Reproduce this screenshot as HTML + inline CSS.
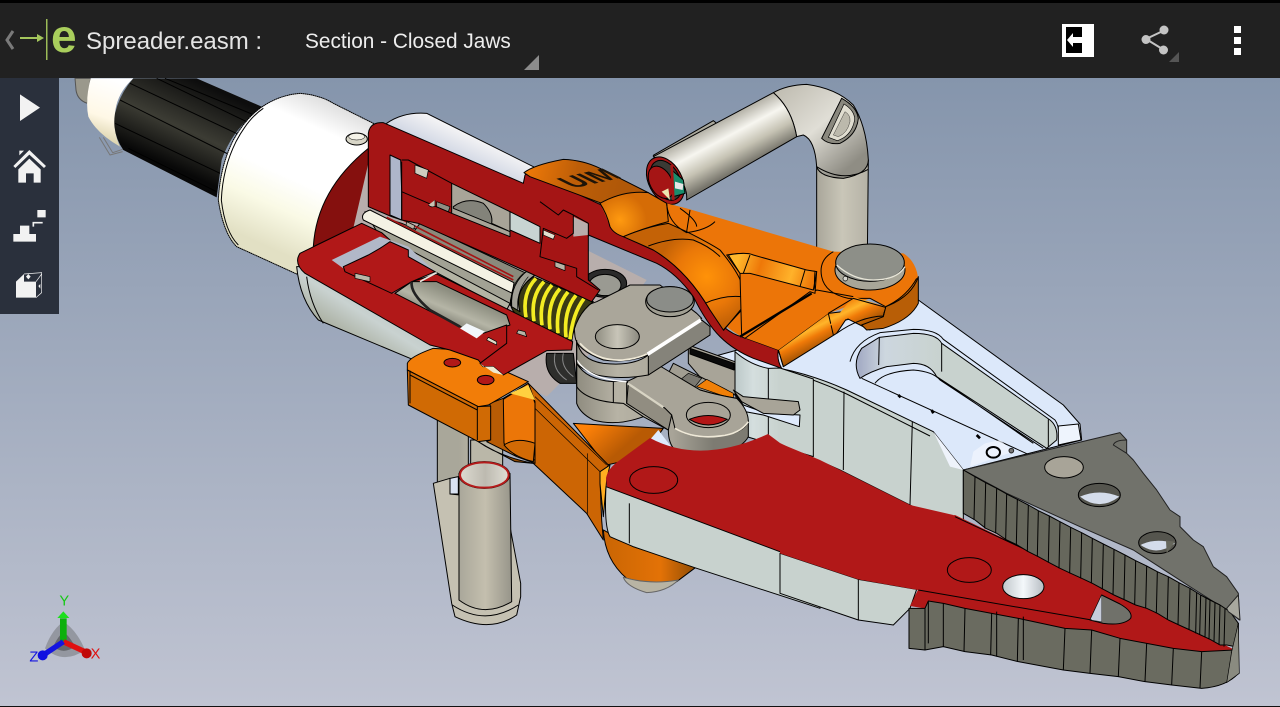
<!DOCTYPE html>
<html><head><meta charset="utf-8"><title>Spreader.easm</title>
<style>
html,body{margin:0;padding:0;background:#000}
#p{position:relative;width:1280px;height:707px;overflow:hidden;font-family:"Liberation Sans",sans-serif}
#s{position:absolute;left:0;top:0}
.t{position:absolute;white-space:nowrap;color:#e4e4e4}
</style></head><body><div id="p">
<svg id="s" width="1280" height="707" viewBox="0 0 1280 707" xmlns="http://www.w3.org/2000/svg">
<defs>
<linearGradient id="bg" x1="0" y1="78" x2="0" y2="706" gradientUnits="userSpaceOnUse"><stop offset="0" stop-color="#8595ac"/><stop offset="1" stop-color="#c0c4d2"/></linearGradient>
<linearGradient id="rib" x1="560" y1="230" x2="450" y2="470" gradientUnits="userSpaceOnUse"><stop offset="0" stop-color="#0d0d0d"/><stop offset=".55" stop-color="#3c3c34"/><stop offset="1" stop-color="#080808"/></linearGradient>
<linearGradient id="cyl" x1="1000" y1="300" x2="800" y2="740" gradientUnits="userSpaceOnUse"><stop offset="0" stop-color="#dcdcdc"/><stop offset=".2" stop-color="#fff"/><stop offset=".55" stop-color="#fff"/><stop offset=".75" stop-color="#fafae6"/><stop offset="1" stop-color="#e2e0c4"/></linearGradient>
<linearGradient id="knob" x1="340" y1="240" x2="280" y2="420" gradientUnits="userSpaceOnUse"><stop offset="0" stop-color="#fff"/><stop offset=".6" stop-color="#fff8e6"/><stop offset="1" stop-color="#d9d0a8"/></linearGradient>
<linearGradient id="tube" x1="590" y1="110" x2="670" y2="260" gradientUnits="userSpaceOnUse"><stop offset="0" stop-color="#9d9a8e"/><stop offset=".4" stop-color="#f7f6f0"/><stop offset=".7" stop-color="#c6c3b4"/><stop offset="1" stop-color="#77756c"/></linearGradient>
<linearGradient id="bend" x1="800" y1="20" x2="1000" y2="250" gradientUnits="userSpaceOnUse"><stop offset="0" stop-color="#c2bfb4"/><stop offset=".5" stop-color="#e0ded6"/><stop offset="1" stop-color="#8f8d84"/></linearGradient>
<linearGradient id="vert" x1="890" y1="0" x2="1045" y2="0" gradientUnits="userSpaceOnUse"><stop offset="0" stop-color="#a9a69a"/><stop offset=".5" stop-color="#c9c6b8"/><stop offset="1" stop-color="#b5b2a6"/></linearGradient>
<linearGradient id="htube" x1="177" y1="0" x2="335" y2="0" gradientUnits="userSpaceOnUse"><stop offset="0" stop-color="#a9a79a"/><stop offset=".5" stop-color="#c4bfae"/><stop offset="1" stop-color="#97958a"/></linearGradient>
<linearGradient id="hin" x1="177" y1="0" x2="335" y2="0" gradientUnits="userSpaceOnUse"><stop offset="0" stop-color="#dedcd2"/><stop offset=".5" stop-color="#bdbab0"/><stop offset="1" stop-color="#e4e2da"/></linearGradient>
<linearGradient id="sil" x1="420" y1="100" x2="360" y2="230" gradientUnits="userSpaceOnUse"><stop offset="0" stop-color="#f2f2f4"/><stop offset="1" stop-color="#b0bcd4"/></linearGradient>
<linearGradient id="low" x1="200" y1="560" x2="100" y2="720" gradientUnits="userSpaceOnUse"><stop offset="0" stop-color="#b9c2c0"/><stop offset=".5" stop-color="#c9d2d0"/><stop offset="1" stop-color="#a8ad9e"/></linearGradient>
<linearGradient id="gc" x1="430" y1="600" x2="380" y2="720" gradientUnits="userSpaceOnUse"><stop offset="0" stop-color="#8d8e80"/><stop offset=".4" stop-color="#b5b5a6"/><stop offset="1" stop-color="#55554c"/></linearGradient>
<linearGradient id="g1" x1="50" y1="0" x2="460" y2="0" gradientUnits="userSpaceOnUse"><stop offset="0" stop-color="#8f8c80"/><stop offset=".3" stop-color="#b7b3a5"/><stop offset=".7" stop-color="#a8a498"/><stop offset="1" stop-color="#7d7b72"/></linearGradient>
<linearGradient id="hole" x1="105" y1="0" x2="240" y2="0" gradientUnits="userSpaceOnUse"><stop offset="0" stop-color="#8e8c80"/><stop offset=".5" stop-color="#c8c5b8"/><stop offset="1" stop-color="#8a887e"/></linearGradient>
<linearGradient id="wall" x1="240" y1="0" x2="490" y2="0" gradientUnits="userSpaceOnUse"><stop offset="0" stop-color="#a6aec6"/><stop offset=".3" stop-color="#cdd7df"/><stop offset="1" stop-color="#c8d2ce"/></linearGradient>
<radialGradient id="o1" cx="560" cy="590" r="150" gradientUnits="userSpaceOnUse"><stop offset="0" stop-color="#ff9208"/><stop offset=".6" stop-color="#ea7808"/><stop offset="1" stop-color="#c46206"/></radialGradient>
<radialGradient id="o2" cx="300" cy="420" r="80" gradientUnits="userSpaceOnUse"><stop offset="0" stop-color="#ff9a10"/><stop offset="1" stop-color="#d56c06"/></radialGradient>
<linearGradient id="ofl" x1="860" y1="720" x2="900" y2="800" gradientUnits="userSpaceOnUse"><stop offset="0" stop-color="#ef7b08"/><stop offset=".35" stop-color="#ffb52a"/><stop offset=".6" stop-color="#f07a08"/><stop offset="1" stop-color="#a85604"/></linearGradient>
<linearGradient id="obr" x1="660" y1="520" x2="880" y2="590" gradientUnits="userSpaceOnUse"><stop offset="0" stop-color="#ffb82c"/><stop offset=".3" stop-color="#ee7808"/><stop offset=".72" stop-color="#ffb22a"/><stop offset="1" stop-color="#ee7808"/></linearGradient>
<linearGradient id="olb" x1="620" y1="0" x2="890" y2="0" gradientUnits="userSpaceOnUse"><stop offset="0" stop-color="#cb6604"/><stop offset=".6" stop-color="#e37206"/><stop offset="1" stop-color="#8e4b04"/></linearGradient>
<linearGradient id="ob2" x1="560" y1="260" x2="640" y2="350" gradientUnits="userSpaceOnUse"><stop offset="0" stop-color="#ff8208"/><stop offset="1" stop-color="#b85a04"/></linearGradient>
<linearGradient id="otop" x1="30" y1="260" x2="300" y2="330" gradientUnits="userSpaceOnUse"><stop offset="0" stop-color="#ec7808"/><stop offset=".5" stop-color="#bd5e08"/><stop offset="1" stop-color="#b05808"/></linearGradient>
<linearGradient id="h1" x1="670" y1="0" x2="790" y2="0" gradientUnits="userSpaceOnUse"><stop offset="0" stop-color="#c2c8cc"/><stop offset=".5" stop-color="#f4f8fb"/><stop offset="1" stop-color="#b8bec4"/></linearGradient>
<linearGradient id="pan" x1="525" y1="0" x2="660" y2="0" gradientUnits="userSpaceOnUse"><stop offset="0" stop-color="#bcc8c8"/><stop offset=".4" stop-color="#d4dede"/><stop offset="1" stop-color="#c8d2ce"/></linearGradient>
</defs>

<rect width="1280" height="707" fill="url(#bg)"/>

<!-- rear knob and cylinders -->
<g transform="scale(.33333)" stroke="#000" stroke-width="3" stroke-linejoin="round">
<path d="M225,235 L272,235 L262,310 Q232,300 228,270Z" fill="#9a988c" stroke="#555"/>
<path d="M272,235 L400,235 Q350,280 345,340 Q340,400 360,440 Q290,400 265,350 Q255,300 272,235Z" fill="url(#knob)" stroke="none"/>
<path d="M298,412 L330,465 L368,455 M310,412 L338,458 L368,448" fill="none" stroke="#777"/>
<path d="M400,235 L590,235 L790,322 Q700,380 665,480 L650,592 L370,450 Q335,400 345,340 Q360,280 400,235Z" fill="url(#rib)" stroke="none"/>
<path d="M495,235 L775,350 M390,250 L730,410 M360,300 L690,465 M345,370 L660,520 M385,445 L650,575 M470,235 L750,370" fill="none" stroke="#000" stroke-width="3"/>
<path d="M790,318 Q840,285 900,280 Q960,285 1000,310 L1300,460 L1130,640 L890,822 L710,740 Q670,700 655,600 Q660,500 700,420 Q740,350 790,318Z" fill="url(#cyl)" stroke="#000" stroke-dasharray="5 1"/>
<path d="M790,325 Q745,355 708,425 Q668,505 664,600 Q675,695 715,735" fill="none" stroke="#000"/>
</g>

<!-- handle tube -->
<g transform="translate(520,80) scale(.33333)" stroke="#000" stroke-width="3" stroke-linejoin="round">
<path d="M890,260 Q970,310 1045,240 L1042,530 L890,530Z" fill="url(#vert)"/>
<path d="M760,38 Q800,15 860,13 Q950,25 1000,75 Q1040,140 1045,240 Q1045,282 970,295 Q900,292 890,260 Q885,180 850,165 L830,170 Q815,85 760,38Z" fill="url(#bend)"/>
<path d="M400,226 L580,122 L590,130 L412,234Z" fill="#aaa89c"/>
<path d="M400,230 L760,38 Q815,85 830,170 L500,360 Q505,290 400,230Z" fill="url(#tube)"/>
<path d="M905,175 L965,55 Q1010,80 1015,115 Q1010,165 960,190 Q925,195 905,175Z" fill="#8a887e"/>
<path d="M925,172 L972,72 Q1005,92 1004,120 Q995,168 952,182Z" fill="#e0ddd0" stroke-width="2"/>
<path d="M940,165 L975,95 Q992,105 990,125 Q982,160 955,170Z" fill="#bcb9ac" stroke-width="1"/>
<path d="M890,260 Q970,310 1045,268" fill="none"/>
<g transform="rotate(-28 436 302)">
<ellipse cx="436" cy="302" rx="50" ry="76" fill="#a51515"/>
<ellipse cx="438" cy="302" rx="41" ry="64" fill="#3a3a34"/>
<ellipse cx="422" cy="300" rx="33" ry="52" fill="#a51515"/>
</g>
<path d="M455,270 L490,300 L495,340 L460,350Z" fill="#1a8c6c"/>
<path d="M465,305 L490,312 L488,330 L465,325Z" fill="#e6e6e6" stroke="none"/>
<path d="M425,335 L445,325 L450,360Z" fill="#ece8b0" stroke="none"/>
<path d="M455,255 L460,360" fill="none" stroke="#a51515" stroke-width="8"/>
</g>

<!-- rear handle lower -->
<g transform="translate(400,340) scale(.33333)" stroke="#000" stroke-width="3" stroke-linejoin="round">
<path d="M112,230 L112,460 L205,460 L205,230Z" fill="url(#htube)"/>
<path d="M212,300 L212,380 L308,380 L308,300Z" fill="#bab7a8"/>
<path d="M100,430 L150,415 L150,462 L180,465 L330,560 L362,730 L362,770 L350,825 Q270,880 165,830 L155,790 Z" fill="#c5c1b2"/>
<path d="M150,415 L175,410 L175,462 L150,462Z" fill="#d9e2f2"/>
<path d="M177,400 L177,780 Q250,835 335,785 L330,400Z" fill="url(#htube)"/>
<path d="M157,795 Q255,860 355,795" fill="none"/>
<ellipse cx="253" cy="405" rx="76" ry="40" fill="url(#hin)" stroke="#000"/>
<ellipse cx="253" cy="405" rx="73" ry="38" fill="none" stroke="#b51b1b" stroke-width="6"/>
</g>

<!-- jaw body top -->
<g transform="translate(780,300) scale(.33333)" stroke="#000" stroke-width="3" stroke-linejoin="round">
<path d="M-200,170 L415,0 L850,315 L900,372 L905,420 L550,510 L460,500 L0,250Z" fill="#dce8fa"/>
<path d="M210,185 Q225,125 300,98 L400,88 Q470,88 490,118 L825,360 Q840,380 835,425" fill="none"/>
<path d="M240,235 Q215,190 245,145 L298,112 L400,100 Q470,100 485,130 L810,360 Q835,380 830,420 L800,445 L470,230 Q450,190 400,190 L320,200 Q270,215 240,235Z" fill="url(#wall)"/>
<path d="M298,112 L296,195 M485,130 L485,215 M805,358 L805,440" fill="none"/>
<path d="M245,235 L760,470 M285,250 Q310,215 400,210 Q460,215 480,240 L790,445 M470,230 L760,430" fill="none"/>
<path d="M835,378 L895,372 L903,420 L835,435Z" fill="#eef4fd"/>
<path d="M355,285 L362,292 M455,330 L460,340 M590,405 L600,415" stroke-width="8" fill="none"/>
<path d="M580,455 L615,430 L660,420 L700,455 L570,500Z" fill="#f2f6fd" stroke="none" opacity=".7"/>
<ellipse cx="640" cy="457" rx="20" ry="16" fill="none" stroke-width="6"/>
<circle cx="694" cy="452" r="7" fill="#777" stroke="#222"/>
<path d="M0,205 Q100,225 200,270 L460,395 L550,510 L550,660 L400,620 L180,510 L0,430Z" fill="#c8d2ce"/>
<path d="M0,210 Q100,235 200,282 L450,408" fill="none"/>
<path d="M460,395 L550,510 L510,500Z" fill="#eef3fb" stroke="none"/>
<path d="M192,275 L190,510 M397,365 L390,615" fill="none"/>
</g>

<!-- section body lower, interior -->
<g transform="translate(280,80) scale(.33333)" stroke="#000" stroke-width="3" stroke-linejoin="round">
<path d="M320,130 Q370,95 440,100 L790,275 L730,320 L300,150Z" fill="url(#sil)"/>
<ellipse cx="230" cy="177" rx="32" ry="18" fill="#d8d6c8"/>
<ellipse cx="230" cy="170" rx="24" ry="10" fill="#f4f2e8" stroke-width="1.500"/>
<path d="M265,205 L265,390 L245,430 L100,500 Q110,330 265,205Z" fill="#85100e"/>
<path d="M50,560 Q60,660 115,720 L450,860 L600,870 L600,760 L250,560Z" fill="url(#low)"/>
<path d="M80,590 Q90,670 130,730" fill="none"/>
<path d="M265,250 L900,500 L1100,600 L950,800 L800,950 L500,800 L200,530Z" fill="#b8aeac" stroke="none"/>
<!-- dark bearings -->
<ellipse cx="975" cy="610" rx="65" ry="42" fill="#2a2a2a"/>
<ellipse cx="975" cy="615" rx="48" ry="32" fill="#9a9a92"/>
<path d="M800,820 Q790,880 840,910 L890,910 L880,820Z" fill="#2e2e2c"/>
<path d="M825,820 Q815,870 860,900 M850,820 Q840,860 880,890" stroke="#888" fill="none"/>
<!-- interior rod region -->
<path d="M255,395 L365,430 L740,585 L700,680 L420,550 L300,470Z" fill="#a2a294"/>
<path d="M420,430 L760,590 L700,640 L390,470Z" fill="#8a8a7c"/>
<path d="M270,390 L702,608 L697,640 L250,420 Q240,400 270,390Z" fill="#f4f2e4"/>
<path d="M320,412 L700,600 M330,400 L700,590" stroke="#a51515" stroke-width="5" fill="none"/>
<path d="M380,505 L690,670 L680,690 L380,530Z" fill="#b4b4a4"/>
</g>

<!-- lower orange arm -->
<g transform="translate(400,340) scale(.33333)" stroke="#000" stroke-width="3" stroke-linejoin="round">
<path d="M610,570 Q615,660 680,715 Q750,735 830,725 L890,680 L700,620Z" fill="url(#olb)"/>
<path d="M670,712 Q680,740 740,758 Q800,755 835,720 Q750,735 670,712Z" fill="#b8b4a4" stroke="#666"/>
<path d="M520,250 L790,265 L730,350 L620,375 L590,340Z" fill="url(#ob2)"/>
<path d="M385,130 L625,375 L600,420 L605,540 L610,600 L560,520 L400,370 L390,190Z" fill="#cc6504"/>
<path d="M405,205 L600,395 M405,170 L620,375 M562,340 L562,525" fill="none" stroke-width="2"/>
<path d="M600,395 L630,375 L620,420 L610,530 L600,430Z" fill="#ffae20"/>
<path d="M270,190 L310,175 L385,130 L405,185 L405,370 L350,350 L260,305 L270,300Z" fill="#b85c05"/>
<path d="M310,178 L385,130 L405,190 L405,360 L345,345 L312,310Z" fill="#ec7608"/>
<path d="M330,160 L385,135 L405,180Z" fill="#ffd040" stroke="none"/>
<path d="M312,315 Q350,290 405,310 L400,365 Q340,350 312,315Z" fill="#d26a05"/>
<path d="M235,305 Q300,350 400,370 L345,365 L260,320Z" fill="#8f4a06"/>
<path d="M22,70 Q30,50 100,25 L180,30 L240,60 L385,125 L265,195 L235,200 L22,90Z" fill="#f27d08"/>
<path d="M22,90 L235,200 L272,198 L272,300 L235,305 L25,195Z" fill="#d06a04"/>
<path d="M30,92 L30,190 M232,200 L232,300 M30,105 L232,210" fill="none"/>
</g>

<!-- gray link assembly -->
<g transform="translate(560,280) scale(.33333)" stroke="#000" stroke-width="3" stroke-linejoin="round">
<path d="M525,215 Q570,255 625,265 L660,264 L760,297 L760,530 L560,470 L525,340Z" fill="url(#pan)"/>
<path d="M625,265 L625,470" fill="none"/>
<path d="M385,195 L525,245 L525,345 L445,320 L385,250Z" fill="#a8a498"/>
<path d="M390,205 L522,250 L522,270 L390,222Z" fill="#0a0a0a"/>
<path d="M340,250 L500,330 L520,355 L430,345 L320,290Z" fill="#a29e92"/>
<path d="M385,280 L425,295 L405,320 L360,300Z" fill="#7a7870" stroke-width="2"/>
<path d="M410,320 L440,298 L520,340 L520,358Z" fill="#f08008" stroke-width="2"/>
<path d="M525,340 L555,395 L610,405 L718,440 L720,405 L620,400 L550,375Z" fill="#deeafc"/>
<path d="M520,330 L550,350 L715,365 L720,390 L700,405 L610,400 L545,365Z" fill="#a8a498"/>
<path d="M295,450 L345,515 L265,485Z" fill="#deeafc" stroke="none"/>
<path d="M50,250 Q80,300 160,305 L250,300 L300,260 L420,330 Q470,345 530,355 Q565,390 565,430 L565,470 Q550,500 490,520 Q400,540 345,510 Q325,490 325,450 L250,410 Q170,440 100,420 Q60,400 50,370Z" fill="url(#g1)"/>
<path d="M200,305 L300,258 L420,330 Q470,345 530,355 Q565,390 565,425 Q550,460 480,468 Q395,478 345,445 L335,405 L315,385 L205,310Z" fill="#a8a498"/>
<path d="M205,310 L315,385 L335,405 L325,450 L200,370Z" fill="#918d81"/>
<path d="M203,310 L310,382" stroke="#d8d4c4" stroke-width="7" fill="none"/>
<path d="M160,305 L160,368 M200,305 L200,370 M50,320 Q80,365 190,370 L250,410" fill="none"/>
<path d="M345,445 Q400,478 480,468 Q540,462 565,425" fill="none" stroke="#efe9d8" stroke-width="5"/>
<ellipse cx="445" cy="405" rx="66" ry="38" fill="#a8a498"/>
<path d="M388,418 Q445,395 502,418 Q445,452 388,418Z" fill="#b31616" stroke="#000"/>
<path d="M50,180 Q60,240 130,250 Q220,260 265,225 L425,120 L450,140 L450,165 L265,285 Q180,300 110,285 Q60,265 50,250Z" fill="url(#g1)"/>
<path d="M265,225 L425,120 L450,140 L450,165 L265,285Z" fill="#85837a"/>
<path d="M40,115 Q50,85 110,65 L210,15 L300,15 L410,100 L425,115 L265,225 Q200,250 130,240 Q50,210 45,170Z" fill="#aaa69a"/>
<path d="M260,218 L420,115 L425,125 L265,228Z" fill="#fff" stroke="none"/>
<path d="M60,190 Q110,245 190,240 Q235,235 260,222" fill="none" stroke="#f0ead8" stroke-width="5"/>
<ellipse cx="172" cy="170" rx="66" ry="36" fill="url(#hole)"/>
<ellipse cx="330" cy="65" rx="73" ry="45" fill="#a09e92"/>
<ellipse cx="330" cy="58" rx="70" ry="38" fill="#8b8d88"/>
<path d="M50,240 Q90,300 200,305" fill="none" stroke="#fff" stroke-width="4"/>
<path d="M50,250 L50,180 M50,320 L50,250" fill="none"/>
</g>

<!-- lower red section -->
<g transform="translate(280,80) scale(.33333)" stroke="#000" stroke-width="3" stroke-linejoin="round">
<!-- spring -->
<path d="M700,640 L760,590 L940,665 Q885,705 875,785 L705,700 Q680,670 700,640Z" fill="#3a3a14"/>
<path d="M768,595 Q725,640 738,712 M792,605 Q750,650 762,724 M816,615 Q775,660 786,736 M840,626 Q800,670 810,748 M864,636 Q825,682 834,760 M888,646 Q850,692 858,772 M912,656 Q878,700 870,778" fill="none" stroke="#f3ec22" stroke-width="11"/>
<path d="M745,570 Q690,610 695,680 L720,695 Q700,630 765,585Z" fill="#a2a096"/>
<path d="M730,580 Q685,620 695,680 M745,590 Q710,630 712,690" fill="none" stroke-width="2"/>
<!-- frame -->
<path d="M245,430 L60,520 Q40,550 75,580 L450,795 L510,810 L595,840 L610,860 L640,860 L670,885 L800,812 L875,810 L878,785 L470,582 L395,605 L330,480 L305,458Z" fill="#b11818"/>
<path d="M300,470 L155,540 L190,565 L340,640 L395,605 L465,575 L385,500Z" fill="#b1b8c8" stroke="none"/>
<path d="M190,560 L265,525 L300,505 L330,485 L385,510 L385,530 L465,575 L395,605 L335,640 L195,575Z" fill="#b11818"/>
<path d="M225,580 L270,590 L270,605 L225,595Z" fill="#bab8a8" stroke-width="2"/>
<path d="M345,640 L395,605 L470,605 L680,705 L690,735 L610,760 L540,740Z" fill="url(#gc)"/>
<path d="M395,605 Q390,640 450,690 L540,740" fill="none" stroke="#222" stroke-width="8"/>
<path d="M420,605 L470,578" stroke="#e8e8e0" stroke-width="5" fill="none"/>
<path d="M540,745 L560,730 L615,755 L590,775Z" fill="#f2f7fb" stroke="none"/>
<path d="M610,760 L680,735 L680,790 L600,850 L610,860" fill="#b11818"/>
<path d="M620,780 L650,795 L650,785 L625,772Z" fill="#e0dcc8" stroke-width="2"/>
<path d="M710,760 L740,770 L735,755 L715,750Z" fill="#b8b4a6" stroke-width="2"/>
<ellipse cx="517" cy="848" rx="25" ry="13" fill="#b11818"/>
<ellipse cx="617" cy="900" rx="25" ry="14" fill="#b11818"/>
<path d="M600,850 L610,860 L640,860 L670,885 L640,878Z" fill="#f0ead0" stroke="none"/>
<!-- upper red band -->
<path d="M265,160 Q270,125 310,128 L730,310 L735,285 Q745,272 770,285 L975,380 Q985,420 990,440 Q1050,480 1120,510 Q1220,570 1290,690 L1330,740 Q1360,765 1385,770 L1495,810 Q1490,840 1505,865 L1420,835 Q1360,810 1320,770 Q1280,730 1240,650 Q1190,580 1130,550 L925,465 L925,600 L960,630 L935,665 L730,570 L415,430 L365,420 L335,410 L265,380Z" fill="#a51515"/>
<path d="M330,225 L362,240 L365,335 L365,420 L330,405Z" fill="#aeb6ca"/>
<path d="M515,310 L690,395 L690,470 L515,400Z" fill="#a8a498"/>
<path d="M520,380 Q560,350 610,370 Q640,400 635,430 L690,455 L520,385Z" fill="#83837a" />
<path d="M690,395 L780,440 L780,490 L690,450Z" fill="#c8d4d2"/>
<path d="M880,410 L925,432 L925,465 L880,470Z" fill="#b8aeac" stroke="none"/>
<path d="M880,405 L925,430 L925,470 M780,365 L835,405 L850,390 L880,405 L880,460 L860,475 L790,445 L780,530 L890,565 L890,590 L955,630 M365,240 L385,240 L515,310 M365,335 L515,400 M365,245 L365,420" fill="none"/>
<path d="M405,255 L445,270 L440,295 L405,280Z" fill="#cfcdc0" stroke-width="2"/>
<path d="M470,365 L510,380 L505,395 L470,380Z" fill="#8f8f84" stroke-width="2"/>
<path d="M445,375 Q455,385 465,378 L465,360" fill="#c8c4b4" stroke-width="2"/>
<path d="M790,450 L825,465 L820,478 L790,465Z" fill="#e4e0d0" stroke-width="2"/>
<path d="M825,545 L855,555 L855,572 L825,560Z" fill="#b8b4a6" stroke-width="2"/>
<path d="M380,425 L405,437 L400,448 L378,436Z" fill="#b8b4a6" stroke-width="2"/>
</g>

<!-- upper orange arm -->
<g transform="translate(520,80) scale(.33333)" stroke="#000" stroke-width="3" stroke-linejoin="round">
<path d="M775,810 L925,700 L1095,680 L1090,710 L1050,750 L980,715 L950,760 L790,860Z" fill="url(#ofl)"/>
<path d="M12,278 Q40,255 130,237 Q190,240 240,265 L440,370 L500,385 L940,515 L1150,520 Q1190,545 1195,600 L1195,670 Q1170,720 1090,745 L1090,710 L1097,680 L1050,655 L925,700 L775,810 L665,770 Q610,740 570,690 Q500,570 400,510 Q330,480 270,440 Q255,400 240,370Z" fill="#ec7508" stroke="none"/>
<path d="M12,278 Q40,255 130,238 Q190,240 240,265 L385,338 Q300,340 245,370 L30,290Z" fill="url(#otop)"/>
<path d="M240,370 Q310,330 385,338 L440,370 L445,425 Q370,445 310,470 Q280,460 270,440 Q260,400 240,370Z" fill="url(#o2)"/>
<path d="M310,470 Q380,440 445,430 L500,455 Q570,490 600,510 Q650,570 665,610 L665,690 L610,750 Q590,720 570,690 Q500,570 400,510Z" fill="url(#o1)"/>
<path d="M385,498 Q460,470 520,480 Q570,500 600,530 M555,670 Q610,645 665,650 M690,575 Q680,620 690,655 L610,752" fill="none"/>
<path d="M440,372 Q445,430 500,458 Q560,450 585,425 M480,385 Q530,420 530,440 M510,390 L500,455" fill="none"/>
<path d="M620,525 Q680,515 695,525 L850,570 L890,575 L885,640 L870,635 L675,775 L665,770 L660,580Z" fill="#ec7508"/>
<path d="M625,525 Q680,515 700,525 L860,570 L890,575 L880,630 L690,580 L660,580Z" fill="url(#obr)"/>
<path d="M660,770 L875,640" stroke-width="7" fill="none"/>
<path d="M670,580 L690,525 M840,620 L855,570" fill="none"/>
<path d="M940,515 Q895,540 905,590 Q915,640 985,655 L1050,655" fill="none"/>
<path d="M885,575 Q880,640 890,630 L1000,650" fill="none"/>
<path d="M1195,590 L1195,670 Q1170,720 1090,745 L1040,750 L1025,735 L1090,710 L1097,680 Q1175,650 1195,590Z" fill="#b85e06"/>
<path d="M1190,595 Q1160,650 1097,680 L1050,655" fill="none"/>
<path d="M925,700 L940,765 M775,810 L790,860" fill="none"/>
<path d="M1000,650 L1097,680 L1090,700 Q1000,700 925,740" fill="url(#ofl)" stroke="none"/>
<path d="M925,700 L1000,655 L1097,682 L1090,708 Q1020,710 950,760" fill="none"/>
<ellipse cx="1050" cy="570" rx="105" ry="60" fill="#a8a698"/>
<ellipse cx="1050" cy="548" rx="103" ry="56" fill="#8d8f88"/>
<path d="M950,555 Q1000,600 1060,600 Q1130,600 1155,560" fill="none" stroke="#e8e6d8" stroke-width="4"/>
<circle cx="976" cy="596" r="7" fill="#d8d8d0" stroke-width="2"/>
<text font-size="90" font-family="Liberation Sans,sans-serif" font-weight="bold" fill="#1e1408" stroke="none" transform="matrix(.9,-.2,.9,.45,160,325)">UIM</text>
</g>

<!-- lower red jaw -->
<path d="M607,488 L606,478 Q608,468 620,460 L650,438 Q700,465 768,434 L780,443 L820,463 L910,505 L947,517 L955,515 L1235,650 L1202,652 L1173,648 L1100,640 L910,605 L918,590 L860,580 L820,567 L780,553Z" fill="#b11818"/>
<g transform="translate(400,340) scale(.33333)" stroke="#000" stroke-width="3" stroke-linejoin="round">
<ellipse cx="761" cy="420" rx="72" ry="40" fill="none"/>
<path d="M618,440 L1260,680 L1260,805 L890,685 L700,620 L630,590 Q612,560 618,440Z" fill="#c8d2ce"/>
<path d="M688,490 L688,610" fill="none"/>
</g>

<!-- jaw front -->
<g transform="translate(780,300) scale(.33333)" stroke="#000" stroke-width="3" stroke-linejoin="round">
<path d="M0,760 L235,838 L410,868 L390,925 L340,975 L235,960 L0,880Z" fill="#c8d2ce" />
<path d="M235,838 L235,960" fill="none"/>
<path d="M0,760 L235,838 L415,870 L390,918 L1150,1045 L1265,1056 L1365,1050 L525,650 L520,645 L390,615 L120,480 L0,430Z" fill="#b11818" stroke="none"/>
<ellipse cx="568" cy="810" rx="66" ry="37" fill="none"/>
<ellipse cx="730" cy="860" rx="62" ry="36" fill="url(#h1)"/>
<path d="M965,885 L1020,912 Q1060,935 1052,955 Q1030,978 970,970 L930,960Z" fill="#70716a"/>
<path d="M965,885 L930,960 L965,965Z" fill="#c6ccda" stroke-width="1"/>
<path d="M525,650 L1070,905 M415,870 L935,960" fill="none"/>
<!-- upper plate -->
<path d="M550,510 L1020,398 L1040,420 L1040,460 L1060,480 L1090,520 L1130,570 L1170,630 L1200,650 L1200,680 L1240,720 L1270,740 L1300,800 L1340,830 L1375,880 L1378,960 L1340,930 L1230,860 L1060,750 L900,680 L680,580Z" fill="#71726b" stroke="#222"/>
<ellipse cx="852" cy="502" rx="58" ry="32" fill="#a8a498"/>
<ellipse cx="958" cy="585" rx="63" ry="35" fill="#55554e"/>
<path d="M900,590 Q958,565 1018,590 Q958,635 900,590Z" fill="#d4dcea" stroke="none"/>
<ellipse cx="1132" cy="728" rx="56" ry="33" fill="#55554e"/>
<path d="M1082,735 Q1125,712 1185,730 Q1130,770 1082,735Z" fill="#d4dcea" stroke="none"/>
<path d="M1158,722 L1185,725 L1160,760Z" fill="#66675c" stroke="none"/>
<path d="M1040,420 Q1005,420 1000,435 L1040,460" fill="none" stroke="#222"/>
<!-- upper teeth -->
<path d="M550,510 L585,530 L617,548 L650,565 L680,582 L712,598 L745,615 L775,632 L808,648 L840,665 L872,682 L905,698 L937,715 L970,732 L1002,748 L1035,765 L1067,782 L1100,798 L1132,815 L1165,830 L1197,848 L1230,865 L1262,885 L1290,900 L1320,915 L1350,935 L1375,970 L1365,1040 L1340,1035 L1320,1035 L1290,1018 L1262,1005 L1230,990 L1197,975 L1165,960 L1132,940 L1100,925 L1067,915 L1035,900 L1002,885 L970,868 L937,850 L905,835 L872,820 L840,805 L808,788 L775,770 L745,755 L712,735 L680,720 L650,700 L617,685 L585,660 L550,640Z" fill="#66675c"/>
<path d="M585,530 L582,660 M617,548 L614,685 M650,565 L647,700 M680,582 L677,720 M712,598 L709,735 M745,615 L742,755 M775,632 L772,770 M808,648 L805,788 M840,665 L837,805 M872,682 L869,820 M905,698 L902,835 M937,715 L934,850 M970,732 L967,868 M1002,748 L999,885 M1035,765 L1032,900 M1067,782 L1064,915 M1100,798 L1097,925 M1132,815 L1129,940 M1165,830 L1162,960 M1197,848 L1194,975 M1230,865 L1227,990 M1250,878 L1247,1000 M1262,885 L1259,1005 M1278,892 L1275,1012 M1290,900 L1287,1018 M1305,908 L1302,1025 M1320,915 L1317,1035 M1335,925 L1332,1040" fill="none" stroke="#000" stroke-width="3"/>
<path d="M1340,925 L1375,885 L1380,960 L1345,935Z" fill="#a8a89e" stroke="#222"/>
<!-- lower teeth -->
<path d="M387,925 L435,925 L445,903 L490,910 L555,925 L635,940 L715,955 L855,985 L935,990 L1020,1015 L1100,1030 L1180,1045 L1265,1055 L1362,1050 L1375,970 L1375,1120 Q1340,1160 1265,1165 L1175,1155 L1095,1145 L1015,1130 L930,1120 L850,1110 L715,1085 L635,1065 L555,1055 L490,1040 L435,1050 L387,1045Z" fill="#6a6b60"/>
<path d="M435,925 L435,1050 M445,905 L445,1030 M490,910 L490,1040 M555,925 L552,1055 M635,940 L632,1065 M650,935 L650,1070 M715,955 L712,1085 M730,950 L730,1080 M855,985 L850,1110 M935,990 L930,1120 M1020,1015 L1015,1130 M1100,1030 L1095,1145 M1180,1045 L1175,1155 M1265,1055 L1260,1165 M1355,1055 L1350,1130" fill="none"/>
<path d="M1375,970 L1378,1120 L1340,1148 L1355,1055Z" fill="#8a8b80" stroke-width="2"/>
</g>

<!-- left toolbar -->
<rect x="0" y="78" width="59" height="236" fill="#2a303c"/>
<g transform="scale(.33333)" fill="#f2f2f2">
<path d="M60,283 L120,323 L60,363Z"/>
<path d="M40,498 L88,450 L138,498 L132,504 L88,464 L46,504Z M58,452 L72,452 L58,466Z"/>
<path d="M55,508 L88,476 L122,508 L122,548 L101,548 L101,520 L78,520 L78,548 L55,548Z"/>
<path d="M112,630 H137 V652 H112Z M40,702 H60 V677 H88 V702 H108 V725 H40Z"/>
<path d="M100,680 V668 H128" fill="none" stroke="#f2f2f2" stroke-width="5"/>
<path d="M48,845 L72,822 V845Z M48,845 H108 V893 H48Z"/>
<path d="M72,822 L125,818 V878 L108,893 M108,845 L125,822" fill="none" stroke="#f2f2f2" stroke-width="2"/>
<path d="M85,822 L92,830 L85,838 L78,830Z M115,858 L121,852 L121,866Z"/>
</g>

<!-- axis triad -->
<g transform="translate(20,590) scale(.33333)">
<path d="M130,95 Q170,120 195,180 Q130,225 75,175 Q95,120 130,95Z" fill="#878a90" opacity=".75"/>
<path d="M130,125 Q150,140 165,170 Q130,195 100,170 Q110,145 130,125Z" fill="#5a5c60" opacity=".8"/>
<path d="M130,85 V155" stroke="#0cb00c" stroke-width="20"/>
<path d="M112,84 L130,64 L148,84Z" fill="#1ce01c"/>
<path d="M130,155 L205,190" stroke="#e01010" stroke-width="16"/>
<circle cx="200" cy="190" r="15" fill="#c00808"/>
<path d="M130,155 L70,195" stroke="#1414e0" stroke-width="16"/>
<circle cx="68" cy="196" r="15" fill="#1010e0"/>
<text x="118" y="46" font-family="Liberation Sans,sans-serif" font-size="44" fill="#16c816">Y</text>
<text x="212" y="206" font-family="Liberation Sans,sans-serif" font-size="44" fill="#e01010">X</text>
<text x="28" y="214" font-family="Liberation Sans,sans-serif" font-size="44" fill="#1414e0">Z</text>
</g>

<!-- top bar -->
<rect x="0" y="0" width="1280" height="3" fill="#000"/>
<rect x="0" y="3" width="1280" height="75" fill="#212121"/>
<rect x="0" y="706" width="1280" height="1" fill="#111"/>
<path d="M13,31 L7,40 L13,49" fill="none" stroke="#7a7a7a" stroke-width="3"/>
<path d="M20,38 H38" stroke="#a4c65c" stroke-width="2"/>
<path d="M37,34 L44,38 L37,42Z" fill="#a4c65c"/>
<rect x="46" y="19" width="1.500" height="41" fill="#9cbc58"/>
<text x="51" y="52" font-family="Liberation Sans,sans-serif" font-size="46" font-weight="bold" fill="#a9ce5c">e</text>
<path d="M539,55 V70 H524Z" fill="#8c8c8c"/>
<rect x="1062" y="24" width="32" height="33" fill="#fff"/>
<rect x="1066" y="27" width="16" height="26" fill="#000"/>
<path d="M1067,40 L1073,33 V37 H1082 V43 H1073 V47Z" fill="#fff"/>
<path d="M1165,30 L1146,39 L1164,50" fill="none" stroke="#c4c4c4" stroke-width="2"/>
<circle cx="1164" cy="30" r="4.500" fill="#c4c4c4"/><circle cx="1146" cy="39.500" r="4.500" fill="#c4c4c4"/><circle cx="1163.500" cy="50" r="4.500" fill="#c4c4c4"/>
<path d="M1179,52 V62 H1169Z" fill="#555"/>
<rect x="1234" y="26" width="7" height="7" fill="#fff"/><rect x="1234" y="37" width="7" height="7" fill="#fff"/><rect x="1234" y="48" width="7" height="7" fill="#fff"/>
</svg>
<div class="t" style="left:86px;top:27px;font-size:24px;line-height:30px">Spreader.easm :</div>
<div class="t" style="left:305px;top:29px;font-size:20.800px;line-height:26px;color:#ededed">Section - Closed Jaws</div>
</div></body></html>
